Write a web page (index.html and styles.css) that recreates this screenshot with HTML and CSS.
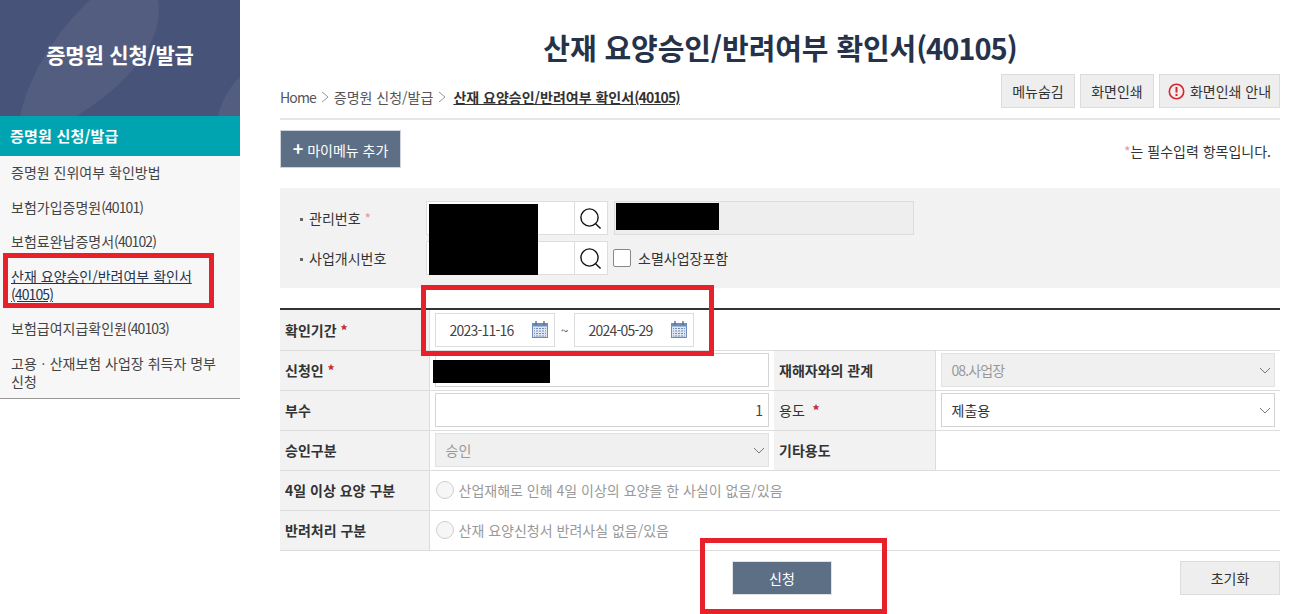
FILE: index.html
```html
<!DOCTYPE html>
<html lang="ko">
<head>
<meta charset="utf-8">
<title>산재 요양승인/반려여부 확인서(40105)</title>
<link rel="stylesheet" href="styles.css">
</head>
<body>
<div class="app">
  <aside class="side">
    <div class="side-head">
      <svg class="side-deco" width="240" height="116" viewBox="0 0 240 116"><path d="M90 0C60 28 30 70 20 116H77C125 85 165 45 158 0Z" fill="#535d80"/><path d="M240 77C230 86 222 100 218 116H240Z" fill="#535d80"/></svg>
      <span class="side-title">증명원 신청/발급</span>
    </div>
    <div class="side-cat">증명원 신청/발급</div>
    <ul class="side-menu">
      <li>증명원 진위여부 확인방법</li>
      <li>보험가입증명원<span class="num">(40101)</span></li>
      <li>보험료완납증명서<span class="num">(40102)</span></li>
      <li class="current">산재 요양승인/반려여부 확인서<span class="num">(40105)</span></li>
      <li>보험급여지급확인원<span class="num">(40103)</span></li>
      <li>고용ㆍ산재보험 사업장 취득자 명부 신청</li>
    </ul>
  </aside>
  <main class="main">
    <h1 class="title">산재 요양승인/반려여부 확인서<span class="title-num">(40105)</span></h1>
    <div class="crumbbar">
      <div class="crumbs">
        <span class="home">Home</span>
        <svg class="crumb-sep" width="8" height="12" viewBox="0 0 8 12"><path d="M1 1l6 5-6 5" fill="none" stroke="#999"/></svg>
        <span>증명원 신청/발급</span>
        <svg class="crumb-sep" width="8" height="12" viewBox="0 0 8 12"><path d="M1 1l6 5-6 5" fill="none" stroke="#999"/></svg>
        <strong>산재 요양승인/반려여부 확인서<span class="num">(40105)</span></strong>
      </div>
      <div class="tools">
        <div class="btn tool-a">메뉴숨김</div>
        <div class="btn tool-b">화면인쇄</div>
        <div class="btn tool-c">
          <svg width="17" height="17" viewBox="0 0 17 17"><circle cx="8.5" cy="8.5" r="7.2" fill="none" stroke="#d8232a" stroke-width="1.6"/><path d="M8.5 4v5.6" stroke="#d8232a" stroke-width="2"/><path d="M8.5 11v2" stroke="#d8232a" stroke-width="2"/></svg>
          화면인쇄 안내
        </div>
      </div>
    </div>
    <div class="actionbar">
      <div class="add-btn"><b class="plus">+</b> 마이메뉴 추가</div>
      <div class="req-note"><span class="star-light">*</span>는 필수입력 항목입니다.</div>
    </div>
    <section class="search">
      <div class="search-row">
        <div class="search-label">관리번호 <span class="star-light">*</span></div>
        <div class="lookup">
          <div class="lookup-input"></div>
          <div class="lookup-btn"><svg width="22" height="21" viewBox="0 0 22 21"><circle cx="9.5" cy="9.5" r="8.6" fill="none" stroke="#111" stroke-width="1.4"/><path d="M15.6 15.8L20.6 20.6" stroke="#111" stroke-width="1.4"/></svg></div>
        </div>
        <div class="readonly"></div>
      </div>
      <div class="search-row">
        <div class="search-label">사업개시번호</div>
        <div class="lookup">
          <div class="lookup-input"></div>
          <div class="lookup-btn"><svg width="22" height="21" viewBox="0 0 22 21"><circle cx="9.5" cy="9.5" r="8.6" fill="none" stroke="#111" stroke-width="1.4"/><path d="M15.6 15.8L20.6 20.6" stroke="#111" stroke-width="1.4"/></svg></div>
        </div>
        <div class="check"></div>
        <span class="check-label">소멸사업장포함</span>
      </div>
      <div class="mask mask-a"></div>
      <div class="mask mask-b"></div>
    </section>
    <table class="form">
      <colgroup><col class="c1"><col class="c2"><col class="c3"><col class="c4"></colgroup>
      <tr class="first">
        <th>확인기간 <span class="star">*</span></th>
        <td colspan="3">
          <div class="dates">
            <div class="date"><span>2023-11-16</span>
              <svg width="16" height="17" viewBox="0 0 16 17"><rect x=".5" y="2.5" width="15" height="14" fill="#dfe7f2" stroke="#6f8db8"/><rect x="0" y="2" width="16" height="3.5" fill="#6f8db8"/><path d="M4 0v4M12 0v4" stroke="#55719b" stroke-width="1.4"/><path d="M2 7.5h12M2 10h12M2 12.5h12M2 15h12" stroke="#6f8db8"/><path d="M3.5 6.5v9M6.5 6.5v9M9.5 6.5v9M12.5 6.5v9" stroke="#dfe7f2"/></svg>
            </div>
            <span class="tilde">~</span>
            <div class="date"><span>2024-05-29</span>
              <svg width="16" height="17" viewBox="0 0 16 17"><rect x=".5" y="2.5" width="15" height="14" fill="#dfe7f2" stroke="#6f8db8"/><rect x="0" y="2" width="16" height="3.5" fill="#6f8db8"/><path d="M4 0v4M12 0v4" stroke="#55719b" stroke-width="1.4"/><path d="M2 7.5h12M2 10h12M2 12.5h12M2 15h12" stroke="#6f8db8"/><path d="M3.5 6.5v9M6.5 6.5v9M9.5 6.5v9M12.5 6.5v9" stroke="#dfe7f2"/></svg>
            </div>
          </div>
        </td>
      </tr>
      <tr>
        <th>신청인 <span class="star">*</span></th>
        <td class="has-mask"><div class="field"></div><div class="mask mask-c"></div></td>
        <th>재해자와의 관계</th>
        <td><div class="field select disabled"><span class="num">08.사업장</span><svg width="12" height="7" viewBox="0 0 12 7"><path d="M1 1l5 5 5-5" fill="none" stroke="#777"/></svg></div></td>
      </tr>
      <tr>
        <th>부수</th>
        <td><div class="field number">1</div></td>
        <th class="plain">용도 &nbsp;<span class="star">*</span></th>
        <td><div class="field select"><span>제출용</span><svg width="12" height="7" viewBox="0 0 12 7"><path d="M1 1l5 5 5-5" fill="none" stroke="#777"/></svg></div></td>
      </tr>
      <tr>
        <th>승인구분</th>
        <td><div class="field select disabled"><span>승인</span><svg width="12" height="7" viewBox="0 0 12 7"><path d="M1 1l5 5 5-5" fill="none" stroke="#777"/></svg></div></td>
        <th>기타용도</th>
        <td></td>
      </tr>
      <tr>
        <th>4일 이상 요양 구분</th>
        <td colspan="3"><div class="radio-line"><i class="radio"></i>산업재해로 인해 4일 이상의 요양을 한 사실이 없음/있음</div></td>
      </tr>
      <tr>
        <th>반려처리 구분</th>
        <td colspan="3"><div class="radio-line"><i class="radio"></i>산재 요양신청서 반려사실 없음/있음</div></td>
      </tr>
    </table>
    <div class="bottom">
      <div class="submit">신청</div>
      <div class="btn reset">초기화</div>
    </div>
  </main>
  <div class="mark mark-a"></div>
  <div class="mark mark-b"></div>
  <div class="mark mark-c"></div>
</div>
</body>
</html>
```

FILE: styles.css
```css
* { box-sizing: border-box; }
html, body { margin: 0; padding: 0; background: #fff; }
body {
  font-family: "Noto Sans CJK KR", "Noto Sans", sans-serif;
  font-size: 14px;
  color: #333;
}
.app { position: relative; display: flex; width: 1295px; height: 614px; overflow: hidden; }
.num { letter-spacing: -0.9px; }

/* Sidebar */
.side { width: 240px; flex: none; }
.side-head {
  position: relative;
  height: 116px;
  background: #475378;
  display: flex;
  align-items: center;
  justify-content: center;
  overflow: hidden;
}
.side-deco { position: absolute; left: 0; top: 0; }
.side-title { position: relative; color: #fff; font-size: 21px; font-weight: 700; line-height: 28px; top: -4px; letter-spacing: -0.2px; }
.side-cat {
  height: 40px;
  padding-left: 10px;
  background: #00a4b1;
  color: #fff;
  font-size: 15px;
  font-weight: 700;
  line-height: 40px;
  letter-spacing: 0.2px;
}
.side-menu {
  list-style: none;
  margin: 0;
  padding: 7px 0 8px 11px;
  background: #f7f7f7;
  border-bottom: 1px solid #999;
  height: 243px;
}
.side-menu li { padding: 0 14px 16.5px 0; line-height: 18px; font-size: 14px; color: #444; word-break: keep-all; }
.side-menu li.current { color: #1f3550; text-decoration: underline; }
.side-menu li:last-child { padding-bottom: 0; }

/* Main */
.main { width: 1040px; padding: 0 0 0 40px; }
.title {
  margin: 0;
  padding-top: 27px;
  height: 72px;
  line-height: 40px;
  text-align: center;
  font-size: 29px;
  font-weight: 700;
  color: #25324a;
  letter-spacing: -0.1px;
}
.title-num { letter-spacing: -1px; }
.crumbbar {
  display: flex;
  justify-content: space-between;
  height: 48px;
  padding-top: 2px;
  border-bottom: 2px solid #e6e6e6;
}
.crumbs { display: flex; align-items: center; gap: 5px; height: 46px; font-size: 14px; color: #555; }
.home { letter-spacing: -0.9px; }
.crumbs strong { margin-left: 2px; font-size: 14px; font-weight: 700; color: #333; text-decoration: underline; }
.crumb-sep { flex: none; }
.tools { display: flex; gap: 5px; }
.btn {
  display: flex;
  align-items: center;
  justify-content: center;
  gap: 5px;
  height: 34px;
  background: #eeeeee;
  border: 1px solid #dcdcdc;
  color: #333;
  font-size: 14px;
}
.tool-a { width: 74px; }
.tool-b { width: 74px; }
.tool-c { width: 121px; }

.actionbar { display: flex; justify-content: space-between; align-items: center; height: 68px; padding: 0 9px 0 0; }
.add-btn {
  width: 121px;
  height: 38px;
  margin-top: -10px;
  background: #5d6f85;
  border: 1px solid #cfd4da;
  color: #fff;
  line-height: 34px;
  text-align: center;
  font-size: 14px;
}
.plus { font-size: 18px; }
.req-note { margin-top: -7px; font-size: 14px; color: #333; }
.star-light { color: #e39aa0; }
.star { color: #c5262d; font-weight: 700; }

/* Search panel */
.search {
  position: relative;
  height: 100px;
  background: #f2f2f2;
  padding-top: 13px;
  display: flex;
  flex-direction: column;
  gap: 6px;
}
.search-row { display: flex; align-items: center; height: 34px; }
.search-label { width: 146px; position: relative; color: #333; font-size: 14px; padding-left: 29px; }
.search-label::before { content: ""; position: absolute; left: 20px; top: 10px; width: 3px; height: 3px; background: #666; }
.lookup { display: flex; width: 182px; height: 34px; border: 1px solid #dedede; background: #fff; }
.lookup-input { flex: 1; }
.lookup-btn { width: 33px; border-left: 1px solid #dedede; display: flex; align-items: center; justify-content: center; }
.readonly { width: 300px; height: 34px; margin-left: 6px; background: #eeeeee; border: 1px solid #dcdcdc; }
.check { width: 18px; height: 18px; margin-left: 5px; border: 1px solid #888; background: #fff; border-radius: 2px; }
.check-label { margin-left: 7px; font-size: 14px; color: #333; }
.mask { position: absolute; background: #000; }
.mask-a { left: 149px; top: 16px; width: 109px; height: 71px; }
.mask-b { left: 336px; top: 15px; width: 103px; height: 27px; }

/* Form table */
.form { width: 1000px; margin-top: 20px; border-collapse: collapse; table-layout: fixed; border-top: 2px solid #333; }
.c1 { width: 149px; } .c2 { width: 345px; } .c3 { width: 161px; } .c4 { width: 345px; }
.form tr { height: 40px; }
.form tr.first { height: 41px; }
.form th, .form td { padding: 0; border-bottom: 1px solid #dcdcdc; font-size: 14px; }
.form th {
  background: #f2f2f2;
  text-align: left;
  padding-left: 5px;
  font-weight: 700;
  color: #333;
  border-right: 1px solid #dcdcdc;
}
.form th.plain { font-weight: 400; }
.form td { padding: 0 5px; }
.has-mask { position: relative; }
.mask-c { left: 3px; top: 9px; width: 117px; height: 23px; }
.field { height: 34px; border: 1px solid #d4d4d4; background: #fff; }
.number { text-align: right; padding-right: 5px; line-height: 32px; color: #444; }
.select { display: flex; justify-content: space-between; align-items: center; padding: 0 3px 0 10px; color: #333; }
.disabled { background: #f0f0f0; border-color: #e2e2e2; color: #999; }
.dates { display: flex; align-items: center; height: 34px; gap: 5px; }
.date {
  display: flex;
  align-items: center;
  justify-content: space-between;
  width: 120px;
  height: 34px;
  padding: 0 6px 0 14px;
  border: 1px solid #dcdcdc;
  background: #fff;
  color: #444;
  font-size: 14px;
  letter-spacing: -0.8px;
}
.tilde { width: 9px; color: #555; text-align: right; }
.radio-line { display: flex; align-items: center; gap: 5px; color: #999; padding-left: 1px; }
.radio { display: block; width: 18px; height: 18px; border: 1px solid #d0d0d0; border-radius: 50%; background: #f6f6f6; }

.bottom { position: relative; display: flex; justify-content: center; padding: 10px 0 0 4px; }
.submit { width: 100px; height: 34px; background: #5d6f85; border: 1px solid #dfe2e6; color: #fff; text-align: center; line-height: 32px; }
.reset { position: absolute; right: 0; top: 10px; width: 100px; }

/* Red annotation boxes */
.mark { position: absolute; border: 5px solid #e8202a; pointer-events: none; }
.mark-a { left: 3px; top: 253px; width: 211px; height: 55px; }
.mark-b { left: 421px; top: 285px; width: 293px; height: 71px; }
.mark-c { left: 700px; top: 538px; width: 187px; height: 76px; }
```
